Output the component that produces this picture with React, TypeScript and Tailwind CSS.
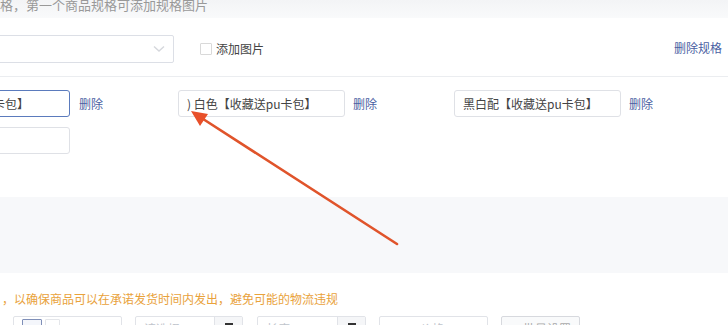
import React from "react";

const font = { fontFamily: '"Noto Sans CJK SC", "Noto Sans", sans-serif' };

function SpecInput({ value, width = "w-[167px]", focused = false, className = "" }: { value: string; width?: string; focused?: boolean; className?: string }) {
  return (
    <div
      className={`h-[27px] ${width} flex items-center px-2 rounded-[3px] border bg-white text-[12px] text-[#444] whitespace-nowrap overflow-hidden ${
        focused ? "border-[#5b7bbd]" : "border-[#dfe1e6]"
      } ${className}`}
    >
      {value}
    </div>
  );
}

function Arrow() {
  return (
    <svg className="absolute left-0 top-0 pointer-events-none" width="728" height="325" viewBox="0 0 728 325">
      <line x1="397" y1="244" x2="200" y2="117" stroke="#e0542b" strokeWidth="2.6" strokeLinecap="round" />
      <polygon points="191,111 208,114 200,126" fill="#e8502a" />
    </svg>
  );
}

export default function App() {
  return (
    <div className="relative w-[728px] h-[325px] overflow-hidden bg-white" style={font}>
      {/* ===== hint strip ===== */}
      <div className="h-[18px] bg-gradient-to-b from-[#f3f4f6] to-[#f9fafb] text-[13px] leading-[10px] text-[#999] whitespace-nowrap">
        格，第一个商品规格可添加规格图片
      </div>

      {/* ===== spec header ===== */}
      <div className="h-[59px] flex items-center border-b border-[#ebedf0]">
        <div className="-ml-[10px] w-[184px] h-[28px] mt-[3px] border border-[#dcdfe6] rounded-[2px] flex items-center justify-end pr-2">
          <svg width="12" height="8" viewBox="0 0 12 8">
            <path d="M1 1.5 L6 6 L11 1.5" fill="none" stroke="#d5d7dc" strokeWidth="1.4" />
          </svg>
        </div>
        <label className="ml-[26px] mt-[3px] flex items-center gap-[4px] text-[12px] text-[#444]">
          <span className="w-[12px] h-[12px] border border-[#d9d9d9] rounded-[1px] bg-white" />
          添加图片
        </label>
        <span className="ml-auto mr-[6px] mt-[1px] text-[12px] text-[#4b5fa3]">删除规格</span>
      </div>

      {/* ===== spec values ===== */}
      <div className="h-[120px] pt-[13px]">
        <div className="flex items-center">
          <SpecInput value="卡包】" width="w-[80px]" focused className="-ml-[10px] justify-start pl-[2px]" />
          <span className="ml-[9px] text-[12px] text-[#4b5fa3]">删除</span>
          <SpecInput value=") 白色【收藏送pu卡包】" className="ml-[75px]" />
          <span className="ml-[8px] text-[12px] text-[#4b5fa3]">删除</span>
          <SpecInput value="黑白配【收藏送pu卡包】" className="ml-[77px]" />
          <span className="ml-[8px] text-[12px] text-[#4b5fa3]">删除</span>
        </div>
        <div className="mt-[10px]">
          <SpecInput value="" width="w-[80px]" className="-ml-[10px]" />
        </div>
      </div>

      {/* ===== gap band ===== */}
      <div className="h-[76px] bg-[#f7f8fa]" />

      {/* ===== stock section ===== */}
      <div className="pt-[18px]">
        <div className="text-[12px] leading-[16px] text-[#e9a23b] whitespace-nowrap pl-[2px]">
          ，以确保商品可以在承诺发货时间内发出，避免可能的物流违规
        </div>
        <div className="mt-[9px] flex items-start">
          <div className="ml-[13px] w-[109px] h-[26px] border border-[#e1e3e8] rounded-[2px] flex items-start pt-[2px] pl-[8px] gap-[3px]">
            <span className="w-[20px] h-[18px] border border-[#7f8fb8] rounded-[1px] bg-[#f4f6fb]" />
            <span className="w-[15px] h-[18px] border border-[#e4e6ea] rounded-[1px]" />
          </div>
          <div className="ml-[13px] w-[108px] h-[26px] border border-[#e1e3e8] rounded-[2px] flex">
            <span className="flex-1 pl-[8px] pt-[3px] text-[12px] text-[#c0c4cc]">请选择</span>
            <span className="w-[28px] border-l border-[#e1e3e8] bg-[#f5f6f8] flex justify-center pt-[6px]">
              <span className="w-[8px] h-[3px] bg-[#333]" />
            </span>
          </div>
          <div className="ml-[14px] w-[109px] h-[26px] border border-[#e1e3e8] rounded-[2px] flex">
            <span className="flex-1 pl-[8px] pt-[3px] text-[12px] text-[#c0c4cc]">长度</span>
            <span className="w-[28px] border-l border-[#e1e3e8] bg-[#f5f6f8] flex justify-center pt-[6px]">
              <span className="w-[8px] h-[3px] bg-[#333]" />
            </span>
          </div>
          <div className="ml-[13px] w-[109px] h-[26px] border border-[#e1e3e8] rounded-[2px] pl-[40px] pt-[3px] text-[12px] text-[#c0c4cc]">
            价格
          </div>
          <div className="ml-[13px] w-[79px] h-[26px] border border-[#d7d9de] rounded-[2px] bg-[#f9fafb] flex items-start justify-center gap-[3px] pt-[3px] text-[12px] text-[#aaa]">
            <span>⊞</span>
            批量设置
          </div>
        </div>
      </div>

      <Arrow />
    </div>
  );
}
